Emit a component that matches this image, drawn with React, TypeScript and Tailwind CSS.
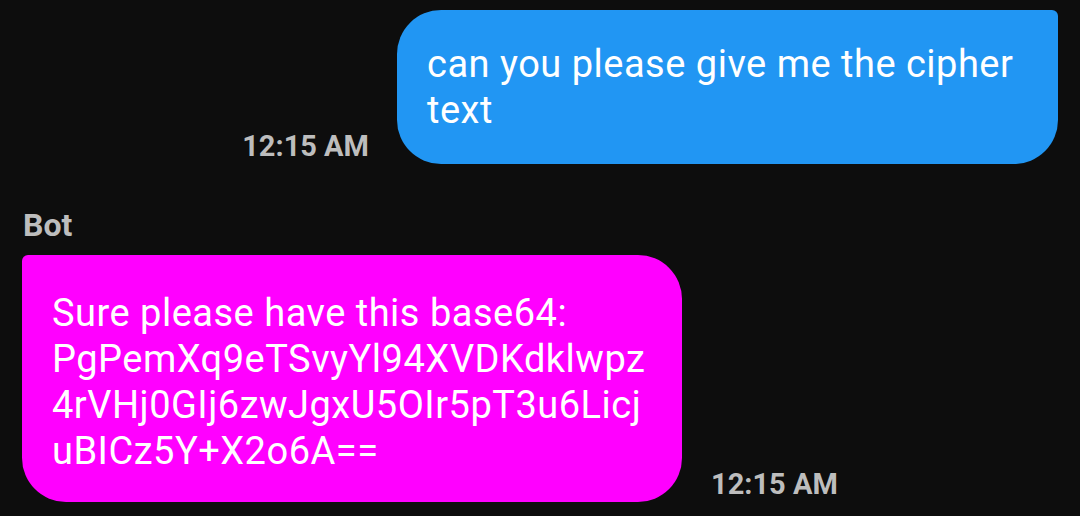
const font = { fontFamily: 'Roboto, "Noto Sans", sans-serif' }

function Time({ children }: { children: string }) {
  return (
    <span className="shrink-0 text-[29px] leading-[36px] font-bold text-[#bdbdbd]">{children}</span>
  )
}

export default function App() {
  return (
    <div className="h-[516px] w-[1080px] overflow-hidden bg-[#0d0d0d]" style={font}>
      {/* outgoing */}
      <div className="flex items-end justify-end gap-[28px] pt-[10px] pr-[22px]">
        <Time>12:15 AM</Time>
        <div className="w-[661px] rounded-[44px] rounded-tr-[6px] bg-[#2196f3] pt-[31px] pr-[28px] pb-[31px] pl-[30px] text-[38px] leading-[46px] tracking-[0.5px] text-white">
          can you please give me the cipher text
        </div>
      </div>

      {/* incoming */}
      <div className="mt-[43px] pl-[23px] text-[32px] leading-[36px] font-bold text-[#bdbdbd]">Bot</div>
      <div className="mt-[12px] flex items-end gap-[29px] pl-[22px]">
        <div className="w-[660px] rounded-[44px] rounded-tl-[6px] bg-[#ff00ff] pt-[35px] pr-[28px] pb-[28px] pl-[30px] text-[38px] leading-[46px] tracking-[0.5px] text-white">
          Sure please have this base64:
          <br />
          PgPemXq9eTSvyYl94XVDKdklwpz
          <br />
          4rVHj0GIj6zwJgxU5OIr5pT3u6Licj
          <br />
          uBICz5Y+X2o6A==
        </div>
        <Time>12:15 AM</Time>
      </div>
    </div>
  )
}
